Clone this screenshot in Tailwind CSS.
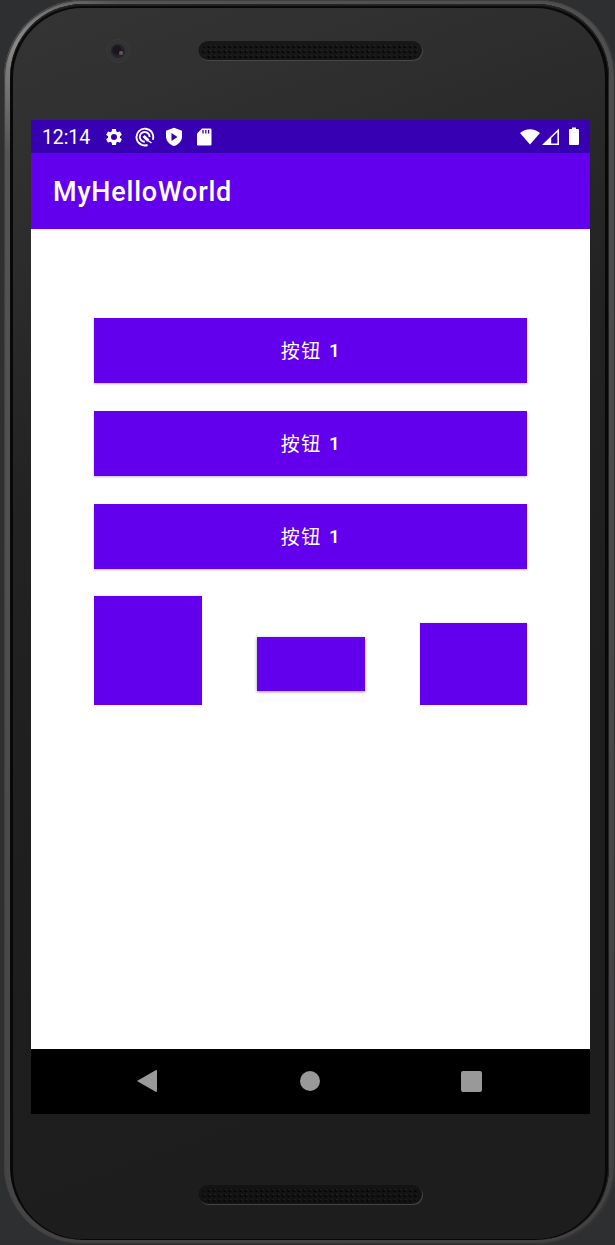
<!DOCTYPE html>
<html lang="zh-CN">
<head>
<meta charset="utf-8">
<title>MyHelloWorld</title>
<script src="https://cdn.jsdelivr.net/npm/@tailwindcss/browser@4"></script>
</head>
<body class="h-[1245px] w-[615px] overflow-hidden bg-[#2d2f31] font-[Roboto,'Noto_Sans_CJK_SC',sans-serif]">
<!-- metal rim -->
<div class="ml-1 h-[1244px] w-[612px] rounded-[78px] bg-[radial-gradient(circle_at_14px_45px,#8c8a89_0,#777574_40px,#555353_110px,#505050_500px,#444243_1250px)] pt-1 pr-[7px] pb-1 pl-[6px] shadow-[inset_-2px_-1px_1px_#353435,inset_1px_1px_1px_#403f3f]">
<!-- dark seam -->
<div class="h-full rounded-[73px] bg-[#080808] pt-1 pr-1 pb-px pl-[3px] shadow-[inset_0_2px_1px_#252424,inset_-1px_0_0_#252424]">
<!-- glass face -->
<div class="flex h-full flex-col rounded-[70px] bg-[linear-gradient(160deg,#343435_0,#303030_10%,#222222_35%,#1e1e1e_60%,#1d1d1e_100%)] pl-[18px]">
  <div class="flex h-28 items-start">
    <div class="mt-[31px] ml-[75px] flex size-6 items-center justify-center rounded-full border border-[#3b3a3b] bg-[#343334]">
      <svg class="size-[14px]" viewBox="0 0 14 14"><circle cx="7" cy="7" r="7" fill="#252329"/><circle cx="6" cy="6" r="4.5" fill="#19171d"/><circle cx="10" cy="9" r="2" fill="#76505a"/><circle cx="9" cy="10" r="1" fill="#494462"/></svg>
    </div>
    <svg class="mt-[32px] ml-[68px] h-[23px] w-[226px]" viewBox="0 0 226 23">
      <defs><pattern id="mesh" x="3" y="4" width="5.3" height="5" patternUnits="userSpaceOnUse"><circle cx="2.6" cy="2.8" r="1.5" fill="#050505"/><circle cx="3.4" cy="1.8" r=".6" fill="#3c3c3c"/></pattern></defs>
      <rect x="1" y="2" width="224" height="19" rx="9.5" fill="#464646"/><rect x=".5" y="1" width="223.5" height="19" rx="9.5" fill="#171717"/><rect x="4" y="4" width="216" height="15" rx="7.5" fill="url(#mesh)"/>
    </svg>
  </div>

  <main class="flex h-[994px] w-[559px] shrink-0 flex-col bg-white text-white">
    <header class="flex h-[33px] items-center bg-[#3700b3] pl-[11px]">
      <span class="w-[62px] pt-[2px] text-[19.5px] leading-none tracking-[-0.1px]">12:14</span>
      <svg class="size-5" viewBox="0 0 24 24" fill="#fff"><path d="M19.14 12.94c.04-.3.06-.61.06-.94 0-.32-.02-.64-.07-.94l2.03-1.58a.5.5 0 0 0 .12-.61l-1.92-3.32a.49.49 0 0 0-.59-.22l-2.39.96a7 7 0 0 0-1.62-.94l-.36-2.54a.48.48 0 0 0-.48-.41h-3.84a.47.47 0 0 0-.47.41l-.36 2.54c-.59.24-1.13.57-1.62.94l-2.39-.96a.47.47 0 0 0-.59.22L2.74 8.87a.47.47 0 0 0 .12.61l2.03 1.58a6 6 0 0 0 0 1.88l-2.03 1.58a.5.5 0 0 0-.12.61l1.92 3.32c.12.22.37.29.59.22l2.39-.96c.5.38 1.03.7 1.62.94l.36 2.54c.05.24.24.41.48.41h3.84c.24 0 .44-.17.47-.41l.36-2.54a7 7 0 0 0 1.62-.94l2.39.96c.22.08.47 0 .59-.22l1.92-3.32a.47.47 0 0 0-.12-.61zM12 15.6A3.6 3.6 0 1 1 12 8.4a3.6 3.6 0 0 1 0 7.2z"/></svg>
      <svg class="ml-[11px] size-5" viewBox="0 0 20 20" fill="none" stroke="#fff"><path d="M12.600 18A8.400 8.400 0 1 1 17.800 12.800" stroke-width="1.900"/><path d="M9.800 14.800A4.900 4.900 0 1 1 14.600 10" stroke-width="1.900"/><path d="M8.500 9l4.800 4.600" stroke-width="3"/><path d="M13 13.500l3.500 2.500" stroke-width="1.500"/></svg>
      <svg class="ml-[9px] size-5" viewBox="0 0 20 20"><path d="M10 .8l8 3v5.500c0 4.400-3.200 8.400-8 9.800-4.800-1.400-8-5.400-8-9.800V3.800z" fill="#fff"/><path d="M7.500 6v8l6-4z" fill="#3700b3"/></svg>
      <svg class="ml-[10px] size-5" viewBox="0 0 20 20"><path d="M8 1.500h8.200a1.300 1.300 0 0 1 1.300 1.300v14.400a1.300 1.300 0 0 1-1.300 1.300H4.300A1.300 1.300 0 0 1 3 17.200V6.500z" fill="#fff"/><path d="M9 3v3.500M11.800 3v3.500M14.600 3v3.500" stroke="#3700b3" stroke-width="1.300"/></svg>
      <svg class="ml-auto h-5 w-[61px]" viewBox="0 0 61 20"><path d="M0 6C5.500.9 14.500.9 20 6L10 17.500z" fill="#fff"/><path d="M22 18L39 1.500V18z" fill="#fff"/><path d="M31.200 11L37.400 5v11.500H31.200z" fill="#3700b3"/><path d="M49 3a1 1 0 0 1 1-1h2V.500h4V2h2a1 1 0 0 1 1 1v14a1 1 0 0 1-1 1h-8a1 1 0 0 1-1-1z" fill="#fff"/></svg>
      <span class="w-[9px]"></span>
    </header>
    <div class="flex h-[76px] items-center bg-[#6200ee] pl-[22px] text-[27px] leading-none font-medium tracking-[0.77px] shadow-[0_1px_1px_#0001]"><h1 class="pt-[2px]">MyHelloWorld</h1></div>
    <section class="flex flex-1 flex-col pt-[89px] pl-[63px]">
      <div class="flex w-[433px] flex-col gap-7 text-[19px] font-medium tracking-[1.6px]">
        <button class="flex h-[65px] items-center justify-center bg-[#6200ee] pt-[3px] pl-px shadow-[0_1px_2px_#0004]"><span class="font-normal">按钮</span><span class="ml-[7px] pb-px">1</span></button>
        <button class="flex h-[65px] items-center justify-center bg-[#6200ee] pt-[3px] pl-px shadow-[0_1px_2px_#0004]"><span class="font-normal">按钮</span><span class="ml-[7px] pb-px">1</span></button>
        <button class="flex h-[65px] items-center justify-center bg-[#6200ee] pt-[3px] pl-px shadow-[0_1px_2px_#0004]"><span class="font-normal">按钮</span><span class="ml-[7px] pb-px">1</span></button>
      </div>
      <div class="mt-[27px] flex w-[433px] items-end justify-between">
        <button class="h-[109px] w-[108px] bg-[#6200ee] shadow-[0_0_1px_#0005]"></button>
        <button class="mb-[14px] h-[54px] w-[108px] bg-[#6200ee] shadow-[0_1px_3px_#0006]"></button>
        <button class="h-[82px] w-[107px] bg-[#6200ee] shadow-[0_0_1px_#0005]"></button>
      </div>
    </section>
    <nav class="flex h-[65px] items-center bg-black pb-px pl-[106px]">
      <svg class="h-[22px] w-5" viewBox="0 0 20 22"><path d="M.8 10.400L18.600.2q1.400-.5 1.400 1v19.600q0 1.500-1.400 1L.8 11.600q-1-.6 0-1.200z" fill="#999"/></svg>
      <span class="ml-[143px] size-[20px] rounded-full bg-[#999]"></span>
      <span class="ml-[141px] size-[21px] rounded-[2px] bg-[#999]"></span>
    </nav>
  </main>
  <svg class="mt-[70px] ml-[167px] h-[23px] w-[226px] shrink-0" viewBox="0 0 226 23">
    <rect x="1" y="2" width="224" height="19" rx="9.5" fill="#444"/><rect x=".5" y="1" width="223.5" height="19" rx="9.5" fill="#131313"/><rect x="4" y="4" width="216" height="15" rx="7.5" fill="url(#mesh)"/>
  </svg>
</div>
</div>
</div>
</body>
</html>
